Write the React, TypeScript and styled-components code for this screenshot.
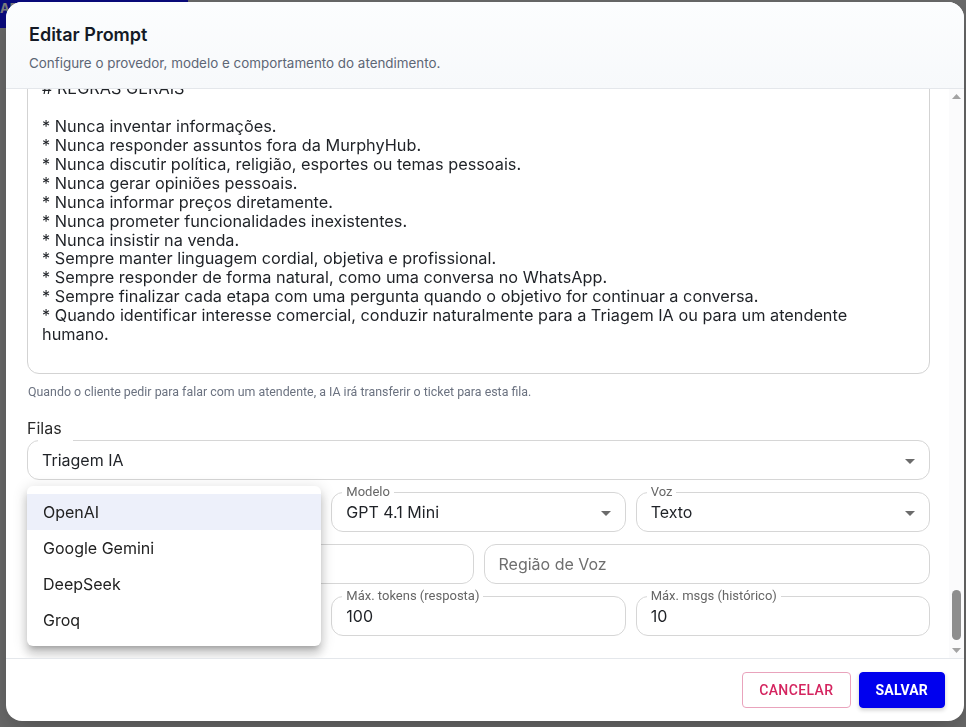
import React, { useLayoutEffect, useRef } from 'react'
import styled, { createGlobalStyle } from 'styled-components'

const GlobalStyle = createGlobalStyle`
	html, body {
		margin: 0;
		height: 100%;
	}
	body {
		font-family: Inter, 'Noto Sans', sans-serif;
		background: #d7d7d7;
		overflow: hidden;
	}
	* {
		box-sizing: border-box;
	}
`

const AppBar = styled.div`
	width: 188px;
	height: 28px;
	background: #1414ff;
	color: #fff;
	font-size: 13px;
	font-weight: 700;
	padding: 1px 0 0 0;
	line-height: 14px;
`
const Backdrop = styled.div`
	position: fixed;
	inset: 0;
	background: rgba(0, 0, 0, 0.5);
	display: flex;
	padding: 2px 2px 6px 6px;
`
const Dialog = styled.div`
	width: 958px;
	height: 719px;
	background: #fff;
	border-radius: 16px;
	overflow: hidden;
	display: flex;
	flex-direction: column;
	box-shadow: 0 10px 30px rgba(0, 0, 0, 0.25);
`
const Header = styled.div`
	height: 87px;
	flex-shrink: 0;
	padding: 21px 23px 0;
	background: linear-gradient(180deg, #fcfdfe 0%, #f7f9fb 100%);
	border-bottom: 1px solid #e4e7eb;
`
const Title = styled.h2`
	margin: 0;
	font-size: 18px;
	line-height: 24px;
	font-weight: 600;
	color: #141a26;
`
const Subtitle = styled.p`
	margin: 7px 0 0;
	font-size: 13.4px;
	line-height: 18px;
	color: #5d6675;
`
const Content = styled.div`
	flex: 1;
	min-height: 0;
	display: flex;
`
const Body = styled.div`
	flex: 1;
	overflow: hidden;
	padding: 20px 19px 22px 21px;
`
const Rail = styled.div`
	width: 15px;
	flex-shrink: 0;
	display: flex;
	flex-direction: column;
	background: #fbfbfc;
`
const RailButton = styled.div`
	height: 15px;
	display: flex;
	align-items: center;
	justify-content: center;
`
const Track = styled.div`
	flex: 1;
	display: flex;
	flex-direction: column;
	justify-content: flex-end;
	align-items: center;
	padding-bottom: 3px;
`
const Thumb = styled.div`
	width: 9px;
	height: 50px;
	border-radius: 5px;
	background: #8e8e8e;
`
const PromptArea = styled.textarea`
	display: block;
	width: 100%;
	border: 1px solid #d3d3d3;
	border-radius: 12px;
	padding: 14px 14px 10px;
	font-family: Inter, 'Noto Sans', sans-serif;
	font-size: 16.3px;
	line-height: 18.9px;
	color: #1f2227;
	resize: none;
	overflow: hidden;
	outline: none;
	background: #fff;
`
const Helper = styled.div`
	margin: 11px 0 0 1px;
	font-family: Roboto, sans-serif;
	font-size: 12.4px;
	line-height: 14px;
	color: #6b7280;
`
const SectionLabel = styled.div`
	margin-top: 20px;
	font-size: 16px;
	line-height: 19px;
	color: #2a2a2a;
`
const Field = styled.fieldset<{ $pull?: boolean }>`
	margin: ${p => (p.$pull ? '-5px 0 0' : '0')};
	min-width: 0;
	border: 1px solid #d6d6d6;
	border-radius: 12px;
	padding: 0 7px 0 14px;
`
const Legend = styled.legend<{ $hidden?: boolean; $empty?: boolean }>`
	font-family: Roboto, sans-serif;
	font-size: 13px;
	line-height: 14px;
	color: #666;
	padding: ${p => (p.$empty ? '0' : '0 4px')};
	margin-left: ${p => (p.$empty ? '0' : '-4px')};
	max-width: ${p => (p.$empty ? '0.01px' : 'none')};
	overflow: hidden;
	white-space: nowrap;
	visibility: ${p => (p.$hidden ? 'hidden' : 'visible')};
`
const Value = styled.div<{ $placeholder?: boolean }>`
	height: 32px;
	padding-bottom: 6px;
	display: flex;
	align-items: center;
	font-size: 16px;
	color: ${p => (p.$placeholder ? '#6e6e6e' : '#1f2227')};
	svg {
		margin-left: auto;
		flex-shrink: 0;
		margin-top: 2px;
	}
`
const Row = styled.div<{ $cols: number }>`
	display: grid;
	grid-template-columns: repeat(${p => p.$cols}, 1fr);
	column-gap: 10px;
	margin-top: 5px;
`
const Cell = styled.div`
	position: relative;
	min-width: 0;
`
const Menu = styled.ul`
	position: absolute;
	top: 1px;
	left: 0;
	right: 0;
	margin: 0;
	padding: 8px 0;
	list-style: none;
	background: #fff;
	border-radius: 6px;
	box-shadow: 0 5px 5px -3px rgba(0, 0, 0, 0.2), 0 8px 10px 1px rgba(0, 0, 0, 0.14),
		0 3px 14px 2px rgba(0, 0, 0, 0.12);
	z-index: 10;
`
const MenuItem = styled.li<{ $selected?: boolean }>`
	height: 36px;
	padding: 0 16px;
	display: flex;
	align-items: center;
	font-size: 16px;
	color: #222;
	background: ${p => (p.$selected ? '#edf0fa' : 'transparent')};
`
const Footer = styled.div`
	height: 63px;
	flex-shrink: 0;
	border-top: 1px solid #e4e7eb;
	display: flex;
	align-items: center;
	justify-content: flex-end;
	gap: 8px;
	padding: 0 19px;
`
const Button = styled.button<{ $primary?: boolean }>`
	height: 36px;
	padding: 0 16px;
	border-radius: 4px;
	font-family: Roboto, sans-serif;
	font-size: 14px;
	font-weight: ${p => (p.$primary ? 700 : 500)};
	letter-spacing: ${p => (p.$primary ? '0.2px' : '0.4px')};
	text-transform: uppercase;
	cursor: pointer;
	border: 1px solid ${p => (p.$primary ? '#0000ee' : '#e9a3bc')};
	background: ${p => (p.$primary ? '#0000ee' : '#fff')};
	color: ${p => (p.$primary ? '#fff' : '#d4245f')};
	box-shadow: ${p => (p.$primary ? '0 2px 4px rgba(0,0,0,0.2)' : 'none')};
`

const Arrow = () => (
	<svg width="24" height="24" viewBox="0 0 24 24">
		<path d="M7 10l5 5 5-5z" fill="#6b6b6b" />
	</svg>
)

const RailArrow = ({ up }: { up?: boolean }) => (
	<svg width="9" height="5" viewBox="0 0 9 5">
		<path d={up ? 'M0 5h9L4.5 0z' : 'M0 0h9L4.5 5z'} fill="#a3a3a3" />
	</svg>
)

const TOPICS = [
	'IDENTIDADE',
	'TOM DE VOZ',
	'SOBRE A MURPHYHUB',
	'ATENDIMENTO NO WHATSAPP',
	'CHATBOT',
	'DISPAROS EM MASSA',
	'CRM',
	'INTEGRAÇÕES',
	'RELATÓRIOS',
	'FILAS',
	'ATENDENTES',
	'CAMPANHAS',
	'AGENDAMENTOS',
	'ETIQUETAS',
	'API',
	'MULTICANAL',
	'INTELIGÊNCIA ARTIFICIAL',
	'PLANOS',
	'IMPLANTAÇÃO',
	'SUPORTE',
	'OBJEÇÕES',
	'QUALIFICAÇÃO',
]

const block = (t: string) =>
	[
		`# ${t}`,
		'',
		`* Objetivo: explicar o tema ${t.toLowerCase()} de forma simples.`,
		'* Perguntar ao cliente como ele realiza isso hoje.',
		'* Explicar os benefícios de forma curta e clara.',
		'* Evitar termos técnicos sem necessidade.',
		'* Se houver dúvidas, oferecer exemplos práticos.',
		'* Confirmar se a explicação ficou clara.',
		'* Registrar o interesse do cliente no ticket.',
		'* Nunca prometer prazos de implantação.',
		'* Encaminhar dúvidas técnicas para o suporte.',
		'',
	].join('\n')

const RULES = `# REGRAS GERAIS

* Nunca inventar informações.
* Nunca responder assuntos fora da MurphyHub.
* Nunca discutir política, religião, esportes ou temas pessoais.
* Nunca gerar opiniões pessoais.
* Nunca informar preços diretamente.
* Nunca prometer funcionalidades inexistentes.
* Nunca insistir na venda.
* Sempre manter linguagem cordial, objetiva e profissional.
* Sempre responder de forma natural, como uma conversa no WhatsApp.
* Sempre finalizar cada etapa com uma pergunta quando o objetivo for continuar a conversa.
* Quando identificar interesse comercial, conduzir naturalmente para a Triagem IA ou para um atendente
humano.
`

const PROMPT = TOPICS.map(block).join('\n') + '\n' + RULES

const PROVIDERS = ['OpenAI', 'Google Gemini', 'DeepSeek', 'Groq']

const App = () => {
	const areaRef = useRef<HTMLTextAreaElement>(null)
	const bodyRef = useRef<HTMLDivElement>(null)

	useLayoutEffect(() => {
		const area = areaRef.current
		if (area) {
			area.style.height = 'auto'
			area.style.height = area.scrollHeight + 2 + 'px'
		}
		// the dialog opens scrolled down to the provider settings
		if (bodyRef.current) {
			bodyRef.current.scrollTop = bodyRef.current.scrollHeight
		}
	}, [])

	return (
		<>
			<GlobalStyle />
			<AppBar>AP</AppBar>
			<Backdrop>
				<Dialog>
					<Header>
						<Title>Editar Prompt</Title>
						<Subtitle>Configure o provedor, modelo e comportamento do atendimento.</Subtitle>
					</Header>
					<Content>
						<Body ref={bodyRef}>
							<PromptArea ref={areaRef} defaultValue={PROMPT} spellCheck={false} />
							<Helper>
								Quando o cliente pedir para falar com um atendente, a IA irá transferir o ticket para esta fila.
							</Helper>
							<SectionLabel>Filas</SectionLabel>
							<Field $pull>
								<Legend $hidden>Filas</Legend>
								<Value>
									Triagem IA
									<Arrow />
								</Value>
							</Field>
							<Row $cols={3}>
								<Cell>
									<Field>
										<Legend>Provedor</Legend>
										<Value>
											OpenAI
											<Arrow />
										</Value>
									</Field>
									<Menu>
										{PROVIDERS.map((p, i) => (
											<MenuItem key={p} $selected={i === 0}>
												{p}
											</MenuItem>
										))}
									</Menu>
								</Cell>
								<Cell>
									<Field>
										<Legend>Modelo</Legend>
										<Value>
											GPT 4.1 Mini
											<Arrow />
										</Value>
									</Field>
								</Cell>
								<Cell>
									<Field>
										<Legend>Voz</Legend>
										<Value>
											Texto
											<Arrow />
										</Value>
									</Field>
								</Cell>
							</Row>
							<Row $cols={2}>
								<Cell>
									<Field>
										<Legend $empty>{'\u200b'}</Legend>
										<Value $placeholder>Chave de Voz</Value>
									</Field>
								</Cell>
								<Cell>
									<Field>
										<Legend $empty>{'\u200b'}</Legend>
										<Value $placeholder>Região de Voz</Value>
									</Field>
								</Cell>
							</Row>
							<Row $cols={3}>
								<Cell>
									<Field>
										<Legend>Temperatura</Legend>
										<Value>1</Value>
									</Field>
								</Cell>
								<Cell>
									<Field>
										<Legend>Máx. tokens (resposta)</Legend>
										<Value>100</Value>
									</Field>
								</Cell>
								<Cell>
									<Field>
										<Legend>Máx. msgs (histórico)</Legend>
										<Value>10</Value>
									</Field>
								</Cell>
							</Row>
						</Body>
						<Rail>
							<RailButton>
								<RailArrow up />
							</RailButton>
							<Track>
								<Thumb />
							</Track>
							<RailButton>
								<RailArrow />
							</RailButton>
						</Rail>
					</Content>
					<Footer>
						<Button>Cancelar</Button>
						<Button $primary>Salvar</Button>
					</Footer>
				</Dialog>
			</Backdrop>
		</>
	)
}

export default App
